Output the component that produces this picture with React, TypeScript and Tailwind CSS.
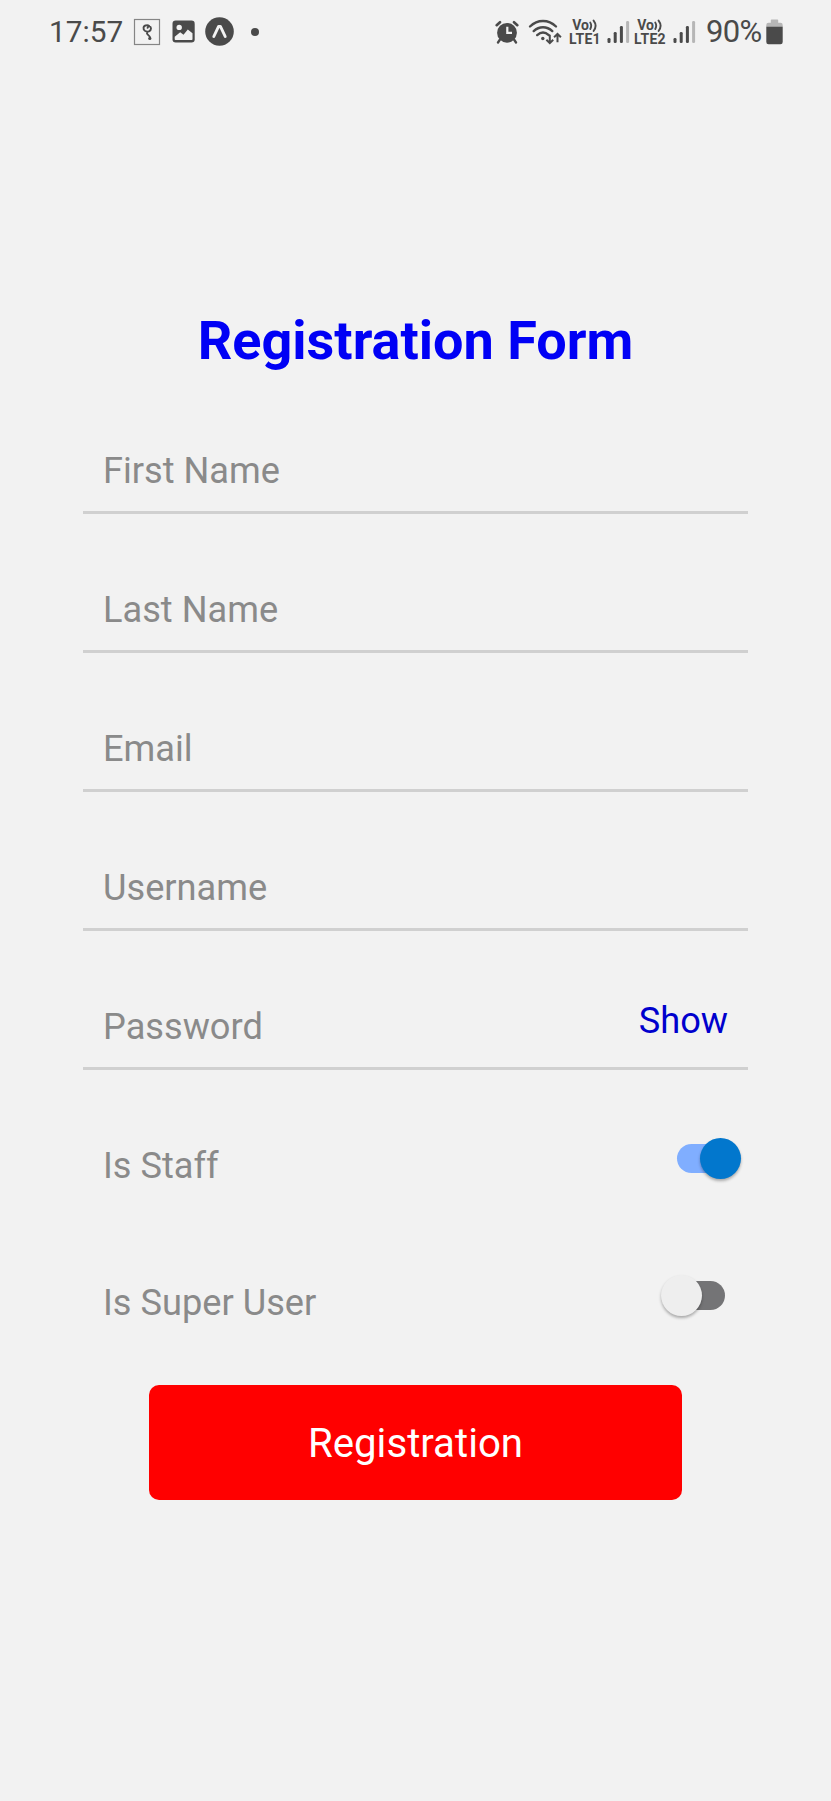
import { useState } from "react";

const INK = "#4a4a4a";

function NumeralIcon() {
  return (
    <svg className="ml-[10px] shrink-0" width="28" height="28" viewBox="0 0 28 28" fill="none">
      <rect x="1.5" y="1.5" width="25" height="25" stroke="#858585" strokeWidth="1.2" />
      <path d="M14.6 9.8C15 7.6 18 8 18 10.6C18 13.2 14.6 14.4 12.2 13C9.6 11.4 9.9 7.4 13.6 7.2C14.8 7.1 15.6 7.4 16.2 7.9M14 13.8C13 16.4 16.4 17.4 17 19.2" stroke={INK} strokeWidth="1.9" strokeLinecap="round" />
      <circle cx="16.8" cy="20.4" r="1.6" fill={INK} />
    </svg>
  );
}

function PhotoIcon() {
  return (
    <svg className="ml-[11px] shrink-0" width="23" height="23" viewBox="0 0 23 23">
      <rect x="0.5" y="0.5" width="22.2" height="22" rx="3.2" fill={INK} />
      <circle cx="7.2" cy="7.4" r="2.7" fill="#f2f2f2" />
      <path d="M2.7 16.7L8.2 12.2L11.5 14.7L15.8 9.4L20.5 13.2V19.2Q20.5 20 19.7 20H3.5Q2.7 20 2.7 19.2Z" fill="#f2f2f2" />
    </svg>
  );
}

function ExpoIcon() {
  return (
    <svg className="ml-[10px] shrink-0" width="29" height="29" viewBox="0 0 29 29">
      <circle cx="14.5" cy="14.5" r="14.3" fill={INK} />
      <path d="M8.8 19.5L13.6 9.4H15.4L20.2 19.5" fill="none" stroke="#f2f2f2" strokeWidth="2.9" strokeLinecap="round" strokeLinejoin="round" />
    </svg>
  );
}

function AlarmIcon() {
  return (
    <svg className="shrink-0" width="24" height="24" viewBox="0 0 24 24" fill="none">
      <circle cx="12" cy="12.8" r="9.9" fill={INK} />
      <path d="M1.7 5.2L5 2.2M22.3 5.2L19 2.2" stroke={INK} strokeWidth="2.6" strokeLinecap="round" />
      <path d="M5 19.5L3 22.5M19 19.5L21 22.5" stroke={INK} strokeWidth="2.3" strokeLinecap="round" />
      <path d="M12.3 6.8V12.8H17" stroke="#f2f2f2" strokeWidth="2.2" />
    </svg>
  );
}

function WifiIcon() {
  return (
    <svg className="ml-[9px] shrink-0" width="34" height="26" viewBox="0 0 34 26" fill="none" stroke={INK}>
      <path d="M2 7.5C9.5 .2 20.5 .2 28 7.5" strokeWidth="2.4" strokeLinecap="round" />
      <path d="M5.7 12.1C11.2 7 18.8 7 24.3 12.1" strokeWidth="2.4" strokeLinecap="round" />
      <path d="M9.2 16.1C12.8 12.8 17.2 12.8 20.8 16.1" strokeWidth="2.4" strokeLinecap="round" />
      <circle cx="14.8" cy="19.5" r="1.7" fill={INK} stroke="none" />
      <path d="M21.8 15.8V24M18.4 20.8L21.8 24.2L25.2 20.8" strokeWidth="2" />
      <path d="M29.5 23.2V15M26.1 18.2L29.5 14.8L32.9 18.2" strokeWidth="2" />
    </svg>
  );
}

function Lte({ label }: { label: string }) {
  return (
    <div className="-ml-[1px] mr-[1px] flex w-[32px] shrink-0 flex-col items-center pt-[1px] text-[14px] leading-[14px] font-bold whitespace-nowrap">
      <span className="flex items-center">
        Vo
        <svg width="9" height="13" viewBox="0 0 9 13" fill="none" stroke={INK} strokeWidth="1.9" strokeLinecap="round">
          <path d="M1.3 3.6Q3.1 6.8 1.3 10M4.6 1.6Q8.6 6.8 4.6 12" />
        </svg>
      </span>
      <span className="tracking-[0.3px]">{label}</span>
    </div>
  );
}

function SignalIcon() {
  return (
    <svg className="shrink-0" width="23" height="24" viewBox="0 0 23 24" fill={INK}>
      <rect x="0.5" y="18" width="3" height="5" rx="1.3" />
      <rect x="6.7" y="12" width="3" height="11" rx="1.3" />
      <rect x="12.9" y="6" width="3" height="17" rx="1.3" />
      <rect x="19.1" y="1" width="3" height="22" rx="1.3" fill="#b6b6b6" />
    </svg>
  );
}

function BatteryIcon() {
  return (
    <svg className="ml-[3px] shrink-0" width="17" height="26" viewBox="0 0 17 26">
      <path d="M4.8 1.2Q4.8 .5 5.5 .5H11.5Q12.2 .5 12.2 1.2V3.7H14.5Q16.7 3.7 16.7 5.9V8H.3V5.9Q.3 3.7 2.5 3.7H4.8Z" fill="#b6b6b6" />
      <path d="M.3 7.7H16.7V23Q16.7 25.2 14.5 25.2H2.5Q.3 25.2 .3 23Z" fill={INK} />
    </svg>
  );
}

function StatusBar() {
  return (
    <header className="flex h-[63px] items-center pr-[48px] pl-[49px] text-[#4a4a4a]">
      <span className="w-[74px] shrink-0 text-[29.8px] leading-[36px]">17:57</span>
      <NumeralIcon />
      <PhotoIcon />
      <ExpoIcon />
      <span className="ml-[17px] size-[8px] rounded-full bg-[#4a4a4a]" />
      <div className="ml-auto flex items-center">
        <AlarmIcon />
        <WifiIcon />
        <span className="w-[8px]" />
        <Lte label="LTE1" />
        <span className="w-[5px]" />
        <SignalIcon />
        <span className="w-[5px]" />
        <Lte label="LTE2" />
        <span className="w-[6px]" />
        <SignalIcon />
        <span className="ml-[10px] w-[57px] text-[31px] leading-[36px] -tracking-[0.7px] whitespace-nowrap">90%</span>
        <BatteryIcon />
      </div>
    </header>
  );
}

function Field({ label, type = "text", action }: { label: string; type?: string; action?: React.ReactNode }) {
  return (
    <div className="flex h-[139px] items-end justify-between border-b-3 border-[#d0d0d0] pr-[20px] pb-[19px] pl-[20px]">
      <input
        type={type}
        placeholder={label}
        className="h-[42px] w-[300px] bg-transparent text-[36.2px] leading-[42px] outline-none placeholder:text-[#8a8a8a]"
      />
      {action}
    </div>
  );
}

function Toggle({ on, onChange }: { on: boolean; onChange: () => void }) {
  return (
    <button
      role="switch"
      aria-checked={on}
      onClick={onChange}
      className={on ? "mb-[8px] flex h-[41px] w-[64px] items-center justify-end" : "mr-[16px] mb-[8px] flex h-[41px] w-[64px] items-center"}
    >
      {on ? (
        <>
          <span className="-mr-[21px] h-[29px] w-[44px] rounded-l-full bg-[#80aeff]" />
          <span className="z-10 size-[41px] rounded-full bg-[#0277cd] shadow-[0_2px_3px_rgba(0,0,0,0.3)]" />
        </>
      ) : (
        <>
          <span className="z-10 size-[41px] shrink-0 rounded-full bg-[#eeeeee] shadow-[0_2px_3px_rgba(0,0,0,0.3)]" />
          <span className="-ml-[21px] h-[29px] w-[44px] shrink-0 rounded-r-full bg-[#747476]" />
        </>
      )}
    </button>
  );
}

export default function App() {
  const [visible, setVisible] = useState(false);
  const [staff, setStaff] = useState(true);
  const [superUser, setSuperUser] = useState(false);

  return (
    <div className="min-h-[1801px] w-[831px] bg-[#f2f2f2] font-['Roboto',sans-serif]">
      <StatusBar />
      <main className="flex flex-col px-[83px] pt-[246px]">
        <h1 className="h-[66px] text-center text-[54px] leading-[64px] font-bold text-[#0000f5]">Registration Form</h1>
        <form onSubmit={(e) => e.preventDefault()}>
          <Field label="First Name" />
          <Field label="Last Name" />
          <Field label="Email" />
          <Field label="Username" />
          <Field
            label="Password"
            type={visible ? "text" : "password"}
            action={
              <button onClick={() => setVisible(!visible)} className="mb-[6px] text-[36.2px] leading-[42px] text-[#0000cd]">
                Show
              </button>
            }
          />
          <div className="flex h-[137px] items-end justify-between pr-[7px] pb-[20px] pl-[20px]">
            <span className="text-[36.2px] leading-[42px] text-[#8a8a8a]">Is Staff</span>
            <Toggle on={staff} onChange={() => setStaff(!staff)} />
          </div>
          <div className="flex h-[137px] items-end justify-between pr-[7px] pb-[20px] pl-[20px]">
            <span className="text-[36.2px] leading-[42px] text-[#8a8a8a]">Is Super User</span>
            <Toggle on={superUser} onChange={() => setSuperUser(!superUser)} />
          </div>
          <button className="mx-auto mt-[40.5px] flex h-[115px] w-[533px] items-center justify-center rounded-[10px] bg-[#ff0000] pt-[5px] text-[40.2px] text-white">
            Registration
          </button>
        </form>
      </main>
    </div>
  );
}
